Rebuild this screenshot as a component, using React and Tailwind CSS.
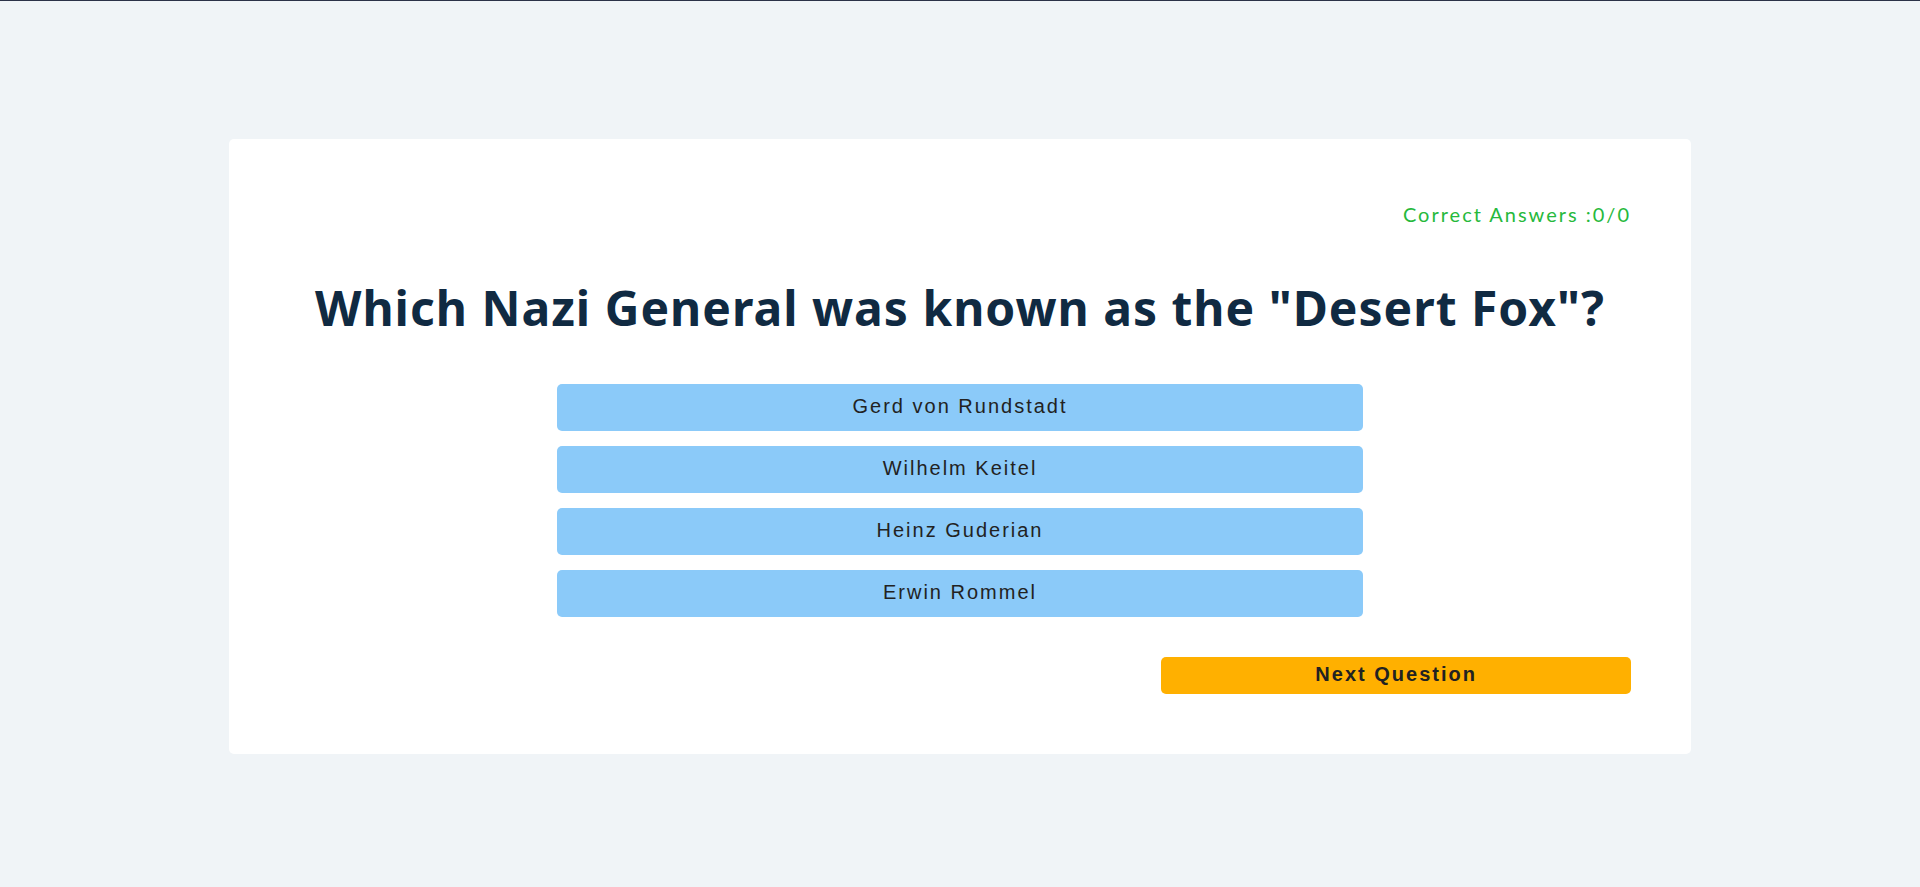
const answers = ['Gerd von Rundstadt', 'Wilhelm Keitel', 'Heinz Guderian', 'Erwin Rommel'];

export default function App() {
  return (
    <div className="min-h-screen border-t border-[#2b3248] bg-[#f0f4f7] px-4 pt-[138px] pb-16 text-xl tracking-[2px] text-[#222222]">
      <main className="mx-auto w-full max-w-[1462px] rounded-[5px] bg-white p-15">
        <p className="text-right font-['Lato',sans-serif] leading-[30px] text-[#26b93c]">
          Correct Answers :0/0
        </p>
        <h1 className="mt-[49px] text-center font-['Noto_Sans',sans-serif] text-5xl leading-[60px] font-bold tracking-[1px] text-[#102a42]">
          Which Nazi General was known as the "Desert Fox"?
        </h1>
        <div className="mx-auto mt-[46px] flex w-3/5 flex-col gap-[15px] font-['Liberation_Sans',sans-serif]">
          {answers.map((answer) => (
            <button key={answer} type="button" className="h-[47px] rounded-[5px] bg-[#8bcaf9] pb-1">
              {answer}
            </button>
          ))}
        </div>
        <button
          type="button"
          className="mt-10 ml-auto block h-[37px] w-[35%] rounded-[5px] bg-[#ffb000] pb-1 font-['Liberation_Sans',sans-serif] font-bold"
        >
          Next Question
        </button>
      </main>
    </div>
  );
}
